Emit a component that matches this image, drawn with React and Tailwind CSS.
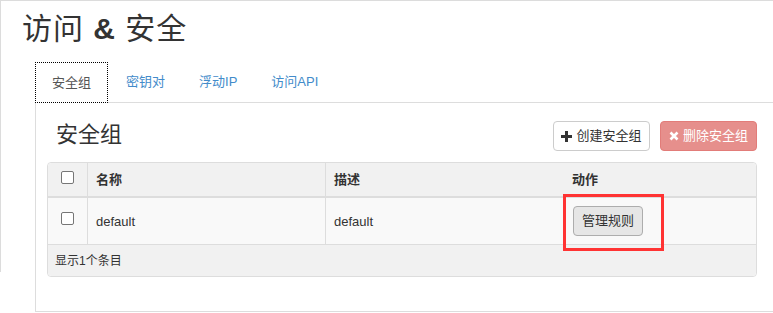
import React from "react";

const F = { fontFamily: '"Liberation Sans", "Noto Sans CJK SC", sans-serif' };

function Check() {
  return <div className="w-[13px] h-[13px] border border-[#767676] bg-white rounded-[2px]" />;
}

export default function App() {
  return (
    <div className="w-[773px] h-[313px] bg-white overflow-hidden border-t border-[#dcdcdc] flex text-[#333]" style={F}>
      <div className="w-px h-[271px] bg-[#dcdcdc] shrink-0" />
      <div className="flex-1 flex flex-col">
        <h1 className="ml-[21px] mt-[9px] h-[38px] leading-[38px] text-[30px] font-normal text-[#333] tracking-[1px]">
          访问 <span className="font-semibold">&amp;</span> 安全
        </h1>
        <div className="ml-[34px] mt-[14px] flex flex-col">
          <div className="flex items-end border-b border-[#dddddd] h-[41px]">
            <div className="h-[41px] -mb-px px-[16px] flex items-center text-[13px] text-[#555] bg-white border border-dotted border-black">
              安全组
            </div>
            <div className="ml-[2px] h-[40px] px-[16px] flex items-center text-[13px] text-[#428bca]">密钥对</div>
            <div className="ml-[2px] h-[40px] px-[16px] flex items-center text-[13px] text-[#428bca]">浮动IP</div>
            <div className="ml-[2px] h-[40px] px-[16px] flex items-center text-[13px] text-[#428bca]">访问API</div>
          </div>
          <div className="h-[209px] border-l border-b border-[#dddddd] pl-[11px] pr-[16px] pt-[18px]">
            <div className="flex items-center justify-between h-[30px]">
              <div className="ml-[9px] text-[22px] leading-[30px] text-[#333] -mt-[2px]">安全组</div>
              <div className="flex gap-[10px]">
                <button className="h-[30px] w-[97px] flex items-center justify-center gap-[4px] border border-[#cccccc] rounded-[4px] bg-white text-[13px] text-[#333]">
                  <svg width="11" height="11" viewBox="0 0 11 11"><path d="M4 0h3v4h4v3H7v4H4V7H0V4h4z" fill="#333" /></svg>
                  创建安全组
                </button>
                <button className="h-[30px] w-[97px] flex items-center justify-center gap-[4px] border border-[#e27c79] rounded-[4px] bg-[#e68f8c] text-[13px] text-white">
                  <svg width="10" height="10" viewBox="0 0 10 10"><path d="M1.5 1.5l7 7M8.5 1.5l-7 7" stroke="#fff" strokeWidth="2.6" /></svg>
                  删除安全组
                </button>
              </div>
            </div>
            <div className="mt-[11px] border border-[#dddddd] rounded-[4px] overflow-visible text-[13px]">
              <div className="flex h-[35px] bg-[#f1f1f1] border-b-2 border-[#dddddd] rounded-t-[4px] font-bold">
                <div className="w-[40px] border-r border-[#dddddd] flex justify-center pt-[8px]"><Check /></div>
                <div className="w-[238px] border-r border-[#dddddd] pl-[8px] flex items-center">名称</div>
                <div className="w-[238px] pl-[8px] flex items-center">描述</div>
                <div className="flex-1 pl-[8px] flex items-center">动作</div>
              </div>
              <div className="flex h-[47px] bg-[#f9f9f9] border-b border-[#dddddd]">
                <div className="w-[40px] border-r border-[#dddddd] flex justify-center pt-[14px]"><Check /></div>
                <div className="w-[238px] border-r border-[#dddddd] pl-[8px] pt-[2px] flex items-center">default</div>
                <div className="w-[238px] pl-[8px] pt-[2px] flex items-center">default</div>
                <div className="flex-1 relative flex items-center pl-[9px]">
                  <button className="h-[30px] w-[70px] border border-[#adadad] rounded-[4px] bg-[#e6e6e6] text-[13px] text-[#333]">管理规则</button>
                  <div className="absolute left-[-1px] top-[-4px] w-[101px] h-[57px] border-[3px] border-[#f33]" />
                </div>
              </div>
              <div className="h-[31px] bg-[#f1f1f1] rounded-b-[4px] pl-[7px] flex items-center text-[12px]">显示1个条目</div>
            </div>
          </div>
        </div>
      </div>
    </div>
  );
}
